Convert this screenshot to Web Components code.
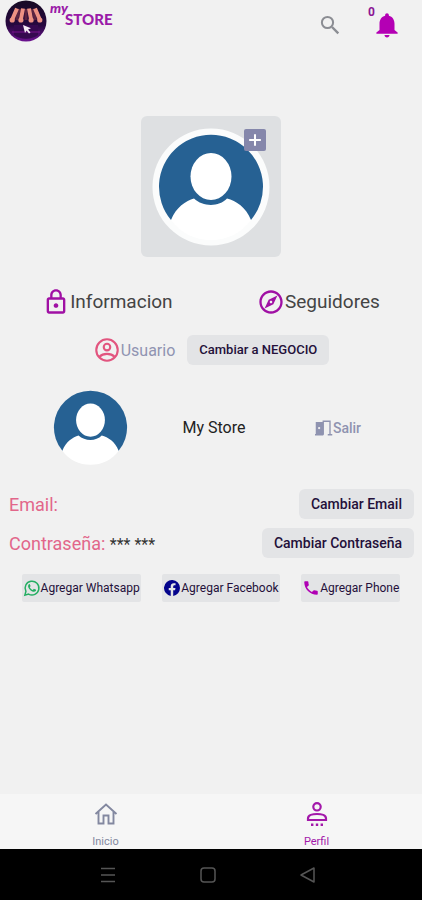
<!DOCTYPE html>
<html lang="es">
<head>
<meta charset="utf-8">
<meta name="viewport" content="width=device-width, initial-scale=1">
<title>My Store</title>
<style>
  body {
    margin: 0;
    background-color: #f1f1f1;
    font-family: Roboto, 'Noto Sans', sans-serif;
    color: #222;
  }
</style>
</head>
<body>
<store-app></store-app>

<script>
// every icon is drawn on a 24x24 grid
const icons = {
  search: '<circle cx="9.5" cy="9.5" r="5.6" fill="none" stroke="currentColor" stroke-width="2"/><path d="M14 14l6.3 6.3" stroke="currentColor" stroke-width="2.4"/>',
  bell: '<path fill="currentColor" d="M12 22c1.1 0 2-.9 2-2h-4c0 1.1.9 2 2 2zm6-6v-5c0-3.07-1.63-5.64-4.5-6.32V4c0-.83-.67-1.5-1.5-1.5s-1.5.67-1.5 1.5v.68C7.64 5.36 6 7.92 6 11v5l-2.5 2v1h17v-1z"/>',
  lock: '<path fill="currentColor" d="M18 8h-1V6c0-2.76-2.24-5-5-5S7 3.24 7 6v2H6c-1.1 0-2 .9-2 2v10c0 1.1.9 2 2 2h12c1.1 0 2-.9 2-2V10c0-1.1-.9-2-2-2zM9 6c0-1.66 1.34-3 3-3s3 1.34 3 3v2H9V6zm9 14H6V10h12v10zm-6-3c1.1 0 2-.9 2-2s-.9-2-2-2-2 .9-2 2 .9 2 2 2z"/>',
  compass: '<path fill="currentColor" d="M12 2C6.48 2 2 6.48 2 12s4.48 10 10 10 10-4.48 10-10S17.52 2 12 2zm0 18c-4.41 0-8-3.59-8-8s3.59-8 8-8 8 3.59 8 8-3.59 8-8 8zm-5.5-2.5l7.51-3.49L17.5 6.5 9.99 9.99 6.5 17.5zm5.5-6.6c.61 0 1.1.49 1.1 1.1s-.49 1.1-1.1 1.1-1.1-.49-1.1-1.1.49-1.1 1.1-1.1z"/>',
  user: '<g fill="none" stroke="currentColor" stroke-width="1.8"><circle cx="12" cy="12" r="9.2"/><circle cx="12" cy="9.5" r="2.8"/><path d="M5.5 17.8c1.6-1.7 3.9-2.5 6.5-2.5s4.9.8 6.5 2.5"/></g>',
  door: '<path fill="currentColor" d="M1 4h10v17H1z"/><path d="M11 21V3h9v18M17 21h6M0 21h11" fill="none" stroke="currentColor" stroke-width="1.8"/><circle cx="5.5" cy="12" r="1.5" fill="#f1f1f1"/>',
  plus: '<path d="M12 2v20M2 12h20" fill="none" stroke="currentColor" stroke-width="3.5"/>',
  whatsapp: '<path d="M2.5 21.5l1.4-5A9.2 9.2 0 1 1 7.4 20.1z" fill="none" stroke="currentColor" stroke-width="2"/><path fill="currentColor" d="M8.6 6.8c-.5 0-1.8.9-1.8 2.7 0 1.6 1.1 3.2 2.5 4.7 1.7 1.7 3.6 2.9 5.4 2.9 1.6 0 2.7-1.1 2.7-2.3 0-.4-.1-.5-.4-.7l-2-.9c-.3-.1-.5-.1-.8.2l-.8 1c-.2.2-.4.2-.7.1-1.5-.7-2.7-1.7-3.5-3.2-.1-.3 0-.5.1-.7l.7-.8c.1-.2.1-.4 0-.7l-.8-1.9c-.1-.3-.3-.4-.6-.4z"/>',
  facebook: '<path fill="currentColor" d="M24 12A12 12 0 1 0 10.1 23.85V15.5H7.1V12h3V9.4c0-3 1.8-4.7 4.5-4.7 1.3 0 2.7.2 2.7.2v3h-1.5c-1.5 0-2 .9-2 1.9V12h3.4l-.6 3.5h-2.8v8.35A12 12 0 0 0 24 12z"/>',
  phone: '<path fill="currentColor" d="M6.6 10.8c1.4 2.8 3.8 5.1 6.6 6.6l2.2-2.2c.3-.3.7-.4 1-.2 1.1.4 2.3.6 3.6.6.6 0 1 .4 1 1V20c0 .6-.4 1-1 1C10.6 21 3 13.4 3 4c0-.6.4-1 1-1h3.5c.6 0 1 .4 1 1 0 1.3.2 2.5.6 3.6.1.3 0 .7-.2 1z"/>',
  home: '<path d="M1.5 12L12 2.5 22.5 12M4.5 10v11.5h5V13.5h5v8h5V10" fill="none" stroke="currentColor" stroke-width="1.9"/>',
  profile: '<g fill="none" stroke="currentColor" stroke-width="2.2"><circle cx="12" cy="4.8" r="3.7"/><path d="M3 18v-1.5c0-3 4.5-4.5 9-4.5s9 1.5 9 4.5V18z"/></g><path fill="currentColor" d="M6 21.5h2.4v2.4H6zM10.8 21.5h2.4v2.4h-2.4zM15.6 21.5H18v2.4h-2.4z"/>',
  menu: '<path d="M5 5.5h14M5 12h14M5 18.5h14" fill="none" stroke="currentColor" stroke-width="1.6"/>',
  square: '<rect x="5" y="5" width="14" height="14" rx="3" fill="none" stroke="currentColor" stroke-width="1.5"/>',
  back: '<path d="M5 12L18 5v14z" fill="none" stroke="currentColor" stroke-width="1.5" stroke-linejoin="round"/>'
};

class StoreIcon extends HTMLElement {
  constructor() {
    super();
    this._shadowRoot = this.attachShadow({ mode: 'open' });
  }

  static get observedAttributes() {
    return ['name'];
  }

  attributeChangedCallback(name, oldVal, newVal) {
    this._shadowRoot.innerHTML = `
      <style>
        :host {
          display: block;
          flex: none;
          width: var(--icon-size, 24px);
          height: var(--icon-size, 24px);
        }
        svg {
          display: block;
          width: 100%;
          height: 100%;
        }
      </style>
      <svg viewBox="0 0 24 24" aria-hidden="true">${icons[newVal]}</svg>
    `;
  }
}
window.customElements.define('store-icon', StoreIcon);

class StoreAvatar extends HTMLElement {
  constructor() {
    super();
    this._shadowRoot = this.attachShadow({ mode: 'open' });
    this._shadowRoot.innerHTML = `
      <style>
        :host {
          display: block;
          width: var(--avatar-size, 118px);
          height: var(--avatar-size, 118px);
        }
        svg {
          display: block;
          width: 100%;
          height: 100%;
        }
        .ring {
          fill: var(--avatar-ring, #fbfcfc);
        }
      </style>
      <svg viewBox="0 0 118 118" aria-hidden="true">
        <circle class="ring" cx="59" cy="59" r="58.5"/>
        <path d="M19 92A52 52 0 1 1 99 92z" fill="#266193"/>
        <path d="M19 92C24 79 34 73 42 70.5C51 79 67 79 75 70.5C84 73 94 79 99 92C90 105 75 112 59 112S28 105 19 92z" fill="#fff"/>
        <ellipse cx="59" cy="48.5" rx="20.5" ry="23.5" fill="#fff"/>
      </svg>
    `;
  }
}
window.customElements.define('store-avatar', StoreAvatar);

class StoreButton extends HTMLElement {
  constructor() {
    super();
    this._shadowRoot = this.attachShadow({ mode: 'open' });
    this._shadowRoot.innerHTML = `
      <style>
        :host {
          display: block;
          --icon-size: 18px;
        }
        button {
          display: flex;
          align-items: center;
          height: 30px;
          padding: 0 12px;
          border: 0;
          border-radius: 6px;
          background-color: #e3e4e6;
          color: #24103a;
          font: 500 14px/16px Roboto, sans-serif;
          white-space: nowrap;
          cursor: pointer;
        }
        :host([small]) button {
          font-size: 13px;
        }
        :host([social]) button {
          height: 28px;
          padding: 0 1px;
          border-radius: 2px;
          font-size: 12px;
          font-weight: 400;
        }
        :host([plain]) button {
          padding: 0;
          background: none;
          color: #8f93b0;
        }
      </style>
      <button type="button"><slot name="icon"></slot><slot></slot></button>
    `;
  }
}
window.customElements.define('store-button', StoreButton);

class StoreHeader extends HTMLElement {
  constructor() {
    super();
    this._shadowRoot = this.attachShadow({ mode: 'open' });
    this._shadowRoot.innerHTML = `
      <style>
        :host {
          display: flex;
          justify-content: space-between;
          align-items: flex-start;
          height: 50px;
          padding: 0 20px 0 5px;
        }
        .brand {
          display: flex;
          gap: 3px;
        }
        .logo {
          width: 42px;
          height: 42px;
        }
        .name {
          padding-top: 2px;
          color: #9a1aa8;
          font: 900 15px/10px Lato, sans-serif;
        }
        .name span {
          display: block;
        }
        .name .my {
          font-size: 14px;
          font-style: italic;
          line-height: 12px;
        }
        .name .store {
          padding-left: 15px;
        }
        .actions {
          display: flex;
          align-items: center;
          gap: 30px;
          padding-top: 10px;
        }
        button {
          display: block;
          position: relative;
          padding: 0;
          border: 0;
          background: none;
          color: #8b8d93;
          cursor: pointer;
        }
        .alerts {
          --icon-size: 30px;
          color: #b400b4;
        }
        .count {
          position: absolute;
          top: -5px;
          left: -4px;
          color: #8c1694;
          font: 700 12px/14px Roboto, sans-serif;
        }
      </style>
      <div class="brand">
        <svg class="logo" viewBox="0 0 42 42" aria-hidden="true">
          <defs>
            <linearGradient id="night" x1="0" y1="0" x2="0" y2="1">
              <stop offset="0" stop-color="#170b24"/>
              <stop offset=".6" stop-color="#27083f"/>
              <stop offset="1" stop-color="#6c1290"/>
            </linearGradient>
          </defs>
          <circle cx="21" cy="21" r="20.5" fill="url(#night)"/>
          <path d="M9 25h24v10c-7 5-17 5-24 0z" fill="#35094f"/>
          <path d="M7 32h28" stroke="#7b128f" stroke-width="1"/>
          <g stroke="#5c2340" stroke-width="3">
            <path d="M14.5 9l-3 11M21 9v11M27.5 9l3 11"/>
          </g>
          <g stroke="#ed9183" stroke-width="4">
            <path d="M12 8.5L7.5 19M18 8.5L16 19M24 8.5L26 19M30 8.5L34.5 19"/>
          </g>
          <g fill="#ed9183">
            <circle cx="7.2" cy="20" r="2.6"/><circle cx="15.9" cy="20" r="2.6"/>
            <circle cx="26.1" cy="20" r="2.6"/><circle cx="34.8" cy="20" r="2.6"/>
          </g>
          <path d="M18 25l8 3.2-3 1.3 2.5 3-1.5 1-2.4-2.9-1.6 2.4z" fill="#f6edf5"/>
        </svg>
        <div class="name"><span class="my">my</span><span class="store">STORE</span></div>
      </div>
      <div class="actions">
        <button type="button" aria-label="Buscar"><store-icon name="search"></store-icon></button>
        <button type="button" class="alerts" aria-label="Notificaciones">
          <store-icon name="bell"></store-icon><span class="count">0</span>
        </button>
      </div>
    `;
  }
}
window.customElements.define('store-header', StoreHeader);

class StoreProfile extends HTMLElement {
  constructor() {
    super();
    this._shadowRoot = this.attachShadow({ mode: 'open' });
    this._shadowRoot.innerHTML = `
      <style>
        :host {
          display: block;
          padding-top: 66px;
        }
        .photo {
          position: relative;
          display: flex;
          justify-content: center;
          width: max-content;
          margin: 0 auto;
          padding: 12px 11px 11px;
          border-radius: 6px;
          background-color: #dee0e2;
        }
        .add {
          position: absolute;
          top: 13px;
          right: 15px;
          padding: 4px;
          border: 0;
          border-radius: 2px;
          background-color: #8587ab;
          color: #fff;
          --icon-size: 14px;
        }
        .links {
          display: flex;
          justify-content: space-around;
          padding-top: 31px;
        }
        .links a {
          display: flex;
          align-items: center;
          color: #444;
          font-size: 19px;
          line-height: 28px;
          text-decoration: none;
          --icon-size: 28px;
        }
        .links store-icon {
          color: #a010a4;
        }
        .role {
          display: flex;
          justify-content: center;
          align-items: center;
          gap: 12px;
          padding-top: 19px;
        }
        .kind {
          display: flex;
          align-items: center;
          color: #9094b2;
          font-size: 16px;
          --icon-size: 28px;
        }
        .kind store-icon {
          color: #e2557f;
        }
        .account {
          display: grid;
          grid-template-columns: repeat(3, 1fr);
          place-items: center;
          padding: 21px 22px 0 28px;
          font-size: 16px;
          --avatar-size: 83px;
          --avatar-ring: none;
        }
        .fields {
          display: grid;
          gap: 9px;
          padding: 20px 8px 0 9px;
        }
        .fields div {
          display: flex;
          justify-content: space-between;
          align-items: center;
          color: #e2668a;
          font-size: 18px;
        }
        .fields b {
          color: #333;
          font-size: 16px;
          font-weight: 400;
        }
        .social {
          display: flex;
          justify-content: space-evenly;
          padding-top: 16px;
        }
        .whatsapp { color: #25ae63; }
        .facebook { color: #04048c; --icon-size: 16px; margin: 0 1px; }
        .phone { color: #b000b4; }
      </style>
      <div class="photo">
        <store-avatar></store-avatar>
        <button type="button" class="add" aria-label="Agregar foto"><store-icon name="plus"></store-icon></button>
      </div>
      <div class="links">
        <a href="#informacion"><store-icon name="lock"></store-icon>Informacion</a>
        <a href="#seguidores"><store-icon name="compass"></store-icon>Seguidores</a>
      </div>
      <div class="role">
        <span class="kind"><store-icon name="user"></store-icon>Usuario</span>
        <store-button small>Cambiar a NEGOCIO</store-button>
      </div>
      <div class="account">
        <store-avatar></store-avatar>
        <span>My Store</span>
        <store-button plain><store-icon slot="icon" name="door"></store-icon>Salir</store-button>
      </div>
      <div class="fields">
        <div><span>Email:</span><store-button>Cambiar Email</store-button></div>
        <div><span>Contraseña: <b>*** ***</b></span><store-button>Cambiar Contraseña</store-button></div>
      </div>
      <div class="social">
        <store-button social><store-icon slot="icon" class="whatsapp" name="whatsapp"></store-icon>Agregar Whatsapp</store-button>
        <store-button social><store-icon slot="icon" class="facebook" name="facebook"></store-icon>Agregar Facebook</store-button>
        <store-button social><store-icon slot="icon" class="phone" name="phone"></store-icon>Agregar Phone</store-button>
      </div>
    `;
  }
}
window.customElements.define('store-profile', StoreProfile);

class StoreTabs extends HTMLElement {
  constructor() {
    super();
    this._shadowRoot = this.attachShadow({ mode: 'open' });
    this._shadowRoot.innerHTML = `
      <style>
        :host {
          display: block;
        }
        .tabs {
          display: grid;
          grid-template-columns: 1fr 1fr;
          background-color: #f6f6f6;
        }
        a {
          display: grid;
          justify-items: center;
          gap: 9px;
          padding-top: 8px;
          color: #8388a0;
          font-size: 11px;
          line-height: 14px;
          text-decoration: none;
        }
        .active {
          color: #a318aa;
        }
        .system {
          display: flex;
          justify-content: center;
          align-items: center;
          gap: 76px;
          height: 51px;
          padding-right: 6px;
          background-color: #000;
        }
        .system button {
          padding: 0;
          border: 0;
          background: none;
          color: #555;
        }
      </style>
      <nav class="tabs">
        <a href="#inicio"><store-icon name="home"></store-icon>Inicio</a>
        <a href="#perfil" class="active"><store-icon name="profile"></store-icon>Perfil</a>
      </nav>
      <div class="system">
        <button type="button" aria-label="Recientes"><store-icon name="menu"></store-icon></button>
        <button type="button" aria-label="Pantalla de inicio"><store-icon name="square"></store-icon></button>
        <button type="button" aria-label="Volver"><store-icon name="back"></store-icon></button>
      </div>
    `;
  }
}
window.customElements.define('store-tabs', StoreTabs);

class StoreApp extends HTMLElement {
  constructor() {
    super();
    this._shadowRoot = this.attachShadow({ mode: 'open' });
    this._shadowRoot.innerHTML = `
      <style>
        :host {
          display: flex;
          flex-direction: column;
          min-height: 100vh;
        }
        store-profile {
          flex: 1;
        }
      </style>
      <store-header></store-header>
      <store-profile></store-profile>
      <store-tabs></store-tabs>
    `;
  }
}
window.customElements.define('store-app', StoreApp);
</script>
</body>
</html>
